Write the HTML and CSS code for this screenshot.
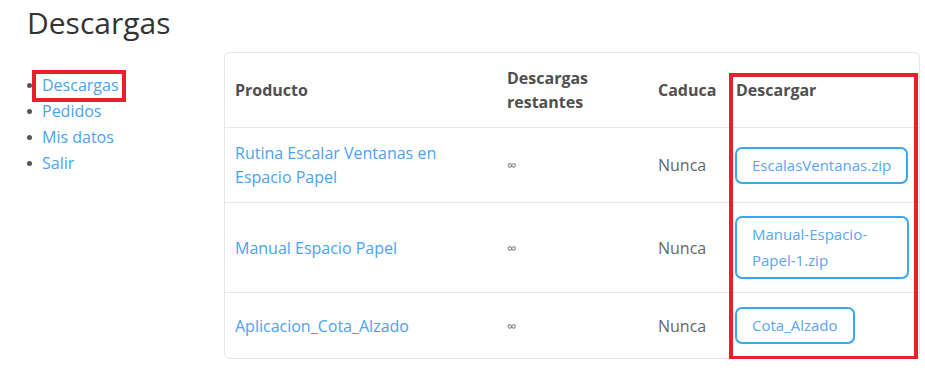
FILE: index.html
```html
<!DOCTYPE html>
<html lang="es">
<head>
<meta charset="utf-8">
<title>Descargas</title>
<link rel="stylesheet" href="styles.css">
</head>
<body>
<div class="page">
  <h1 class="title">Descargas</h1>
  <div class="main">
    <nav class="sidebar">
      <ul class="menu">
        <li class="menu-item"><a class="menu-link is-marked" href="#">Descargas</a></li>
        <li class="menu-item"><a class="menu-link" href="#">Pedidos</a></li>
        <li class="menu-item"><a class="menu-link" href="#">Mis datos</a></li>
        <li class="menu-item"><a class="menu-link" href="#">Salir</a></li>
      </ul>
    </nav>
    <div class="card">
      <table class="downloads">
        <colgroup>
          <col class="col-product">
          <col class="col-remaining">
          <col class="col-expires">
          <col class="col-file">
        </colgroup>
        <thead>
          <tr>
            <th>Producto</th>
            <th>Descargas restantes</th>
            <th>Caduca</th>
            <th>Descargar</th>
          </tr>
        </thead>
        <tbody>
          <tr>
            <td><a class="product-link" href="#">Rutina Escalar Ventanas en Espacio Papel</a></td>
            <td class="infinite">∞</td>
            <td class="expires">Nunca</td>
            <td><a class="file-btn" href="#">EscalasVentanas.zip</a></td>
          </tr>
          <tr>
            <td><a class="product-link" href="#">Manual Espacio Papel</a></td>
            <td class="infinite">∞</td>
            <td class="expires">Nunca</td>
            <td><a class="file-btn" href="#">Manual-Espacio-Papel-1.zip</a></td>
          </tr>
          <tr>
            <td><a class="product-link" href="#">Aplicacion_Cota_Alzado</a></td>
            <td class="infinite">∞</td>
            <td class="expires">Nunca</td>
            <td><a class="file-btn" href="#">Cota_Alzado</a></td>
          </tr>
        </tbody>
      </table>
      <div class="highlight-col"></div>
    </div>
  </div>
</div>
</body>
</html>
```

FILE: styles.css
```css
* { box-sizing: border-box; }

html, body {
  margin: 0;
  background: #ffffff;
}

body {
  font-family: "Open Sans", "Noto Sans", sans-serif;
  font-size: 16px;
  color: #555555;
}

a { text-decoration: none; }

.page {
  padding: 0 5px 0 27px;
}

.title {
  margin: 0;
  padding-top: 3px;
  font-size: 30px;
  line-height: 40px;
  font-weight: 400;
  color: #333333;
}

.main {
  display: flex;
  margin-top: 9px;
}

.sidebar {
  width: 197px;
  flex: none;
}

.menu {
  list-style: none;
  margin: 20px 0 0;
  padding: 0;
}

.menu-item {
  display: flex;
  align-items: center;
  line-height: 26px;
}

.menu-item::before {
  content: "";
  width: 5px;
  height: 5px;
  border-radius: 50%;
  background: #555555;
  margin: 0 10px 0 0;
  flex: none;
}

.menu-link {
  color: #4aa3f2;
  position: relative;
}

.menu-link.is-marked::after {
  content: "";
  position: absolute;
  left: -10px;
  right: -7px;
  top: -2px;
  bottom: -4px;
  border: 4px solid #e8202a;
}

.card {
  position: relative;
  width: 696px;
  border: 1px solid #e6e6e6;
  border-radius: 6px;
}

.downloads {
  width: 100%;
  border-collapse: collapse;
  table-layout: fixed;
}

.col-product { width: 272px; }
.col-remaining { width: 151px; }
.col-expires { width: 78px; }
.col-file { width: 193px; }

.downloads th,
.downloads td {
  padding: 13px 10px;
  line-height: 24px;
  text-align: left;
  vertical-align: middle;
}

.downloads th {
  font-weight: 700;
  color: #505050;
}

.downloads tbody td {
  border-top: 1px solid #e6e6e6;
}

.downloads tbody tr:last-child td {
  padding-top: 14px;
  padding-bottom: 14px;
}

.product-link {
  color: #4aa3f2;
}

.infinite {
  font-size: 13px;
  color: #6a6a6a;
}

.expires {
  color: #666666;
}

.file-btn {
  display: inline-block;
  margin-left: -1px;
  padding: 3px 15px 4px;
  border: 2px solid #3aa6ee;
  border-radius: 7px;
  font-size: 15px;
  line-height: 26px;
  color: #5aa6f2;
}

.highlight-col {
  position: absolute;
  left: 504px;
  top: 20px;
  width: 189px;
  height: 287px;
  border: 4px solid #e8202a;
  pointer-events: none;
}
```
